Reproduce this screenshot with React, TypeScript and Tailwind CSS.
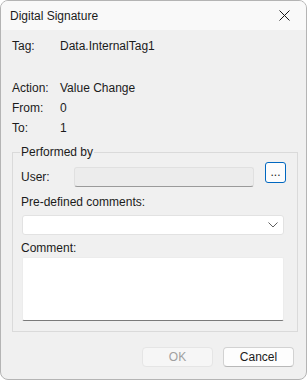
import React from 'react';

function CloseIcon() {
  return (
    <svg width="11" height="11" viewBox="0 0 11 11" fill="none">
      <path d="M0.5 0.5L10.5 10.5M10.5 0.5L0.5 10.5" stroke="#1a1a1a" strokeWidth="1" />
    </svg>
  );
}

function Chevron() {
  return (
    <svg width="10" height="6" viewBox="0 0 10 6" fill="none">
      <path d="M0.5 0.5L5 5L9.5 0.5" stroke="#5f5f5f" strokeWidth="1" />
    </svg>
  );
}

export default function App() {
  return (
    <div className="w-[307px] h-[380px] bg-white" style={{ fontFamily: '"Liberation Sans", Arial, sans-serif' }}>
      <div className="w-[307px] h-[380px] border border-[#b4b4b4] rounded-[8px] overflow-hidden bg-[#f0f0f0] text-[12px] text-[#1b1b1b] flex flex-col">
        {/* title bar */}
        <div className="h-[29px] bg-[#f9f9f9] flex items-center justify-between pl-[9px] pr-[16px]">
          <span>Digital Signature</span>
          <CloseIcon />
        </div>

        <div className="flex flex-col pl-[11px]">
          <div className="mt-[6px] h-[20px] flex items-center">
            <span className="w-[48px]">Tag:</span>
            <span>Data.InternalTag1</span>
          </div>
          <div className="mt-[22px] h-[20px] flex items-center">
            <span className="w-[48px]">Action:</span>
            <span>Value Change</span>
          </div>
          <div className="h-[20px] flex items-center">
            <span className="w-[48px]">From:</span>
            <span>0</span>
          </div>
          <div className="h-[19px] flex items-center">
            <span className="w-[48px]">To:</span>
            <span>1</span>
          </div>
        </div>

        <fieldset className="mt-[7px] ml-[11px] w-[284px] border border-[#dadada] pl-[8px] pr-[11px] pb-[10px]">
          <legend className="h-[16px] leading-[16px] -ml-[1px] px-[1px]">Performed by</legend>
          <div className="mt-[2px] h-[25px] flex items-start">
            <span className="mt-[5px] h-[20px] leading-[20px] w-[53px]">User:</span>
            <div className="mt-[5px] w-[180px] h-[20px] bg-[#ececec] border border-[#e0e0e0] border-b-[#9a9a9a] rounded-[3px]" />
            <button className="ml-[11px] w-[21px] h-[21px] bg-[#fcfcfc] border border-[#0067c0] rounded-[3px] flex items-center justify-center leading-none pb-[2px] text-[12px]">
              ...
            </button>
          </div>
          <div className="mt-[5px] h-[20px] leading-[20px]">Pre-defined comments:</div>
          <div className="mt-[3px] ml-[1px] w-[262px] h-[20px] bg-white border border-[#e2e2e2] rounded-[3px] flex items-center justify-end pr-[5px]">
            <Chevron />
          </div>
          <div className="mt-[3px] h-[19px] leading-[20px]">Comment:</div>
          <div className="ml-[1px] w-[262px] h-[64px] bg-white border border-[#ececec] border-b-[#7a7a7a] rounded-[2px]" />
        </fieldset>

        <div className="mt-[15px] flex justify-end gap-[10px] pr-[12px]">
          <button className="w-[71px] h-[20px] bg-[#f6f6f6] border border-[#e5e5e5] rounded-[4px] text-[#a0a0a0] leading-none">
            OK
          </button>
          <button className="w-[71px] h-[20px] bg-[#fdfdfd] border border-[#d2d2d2] border-b-[#b8b8b8] rounded-[4px] text-[#1b1b1b] leading-none">
            Cancel
          </button>
        </div>
      </div>
    </div>
  );
}
